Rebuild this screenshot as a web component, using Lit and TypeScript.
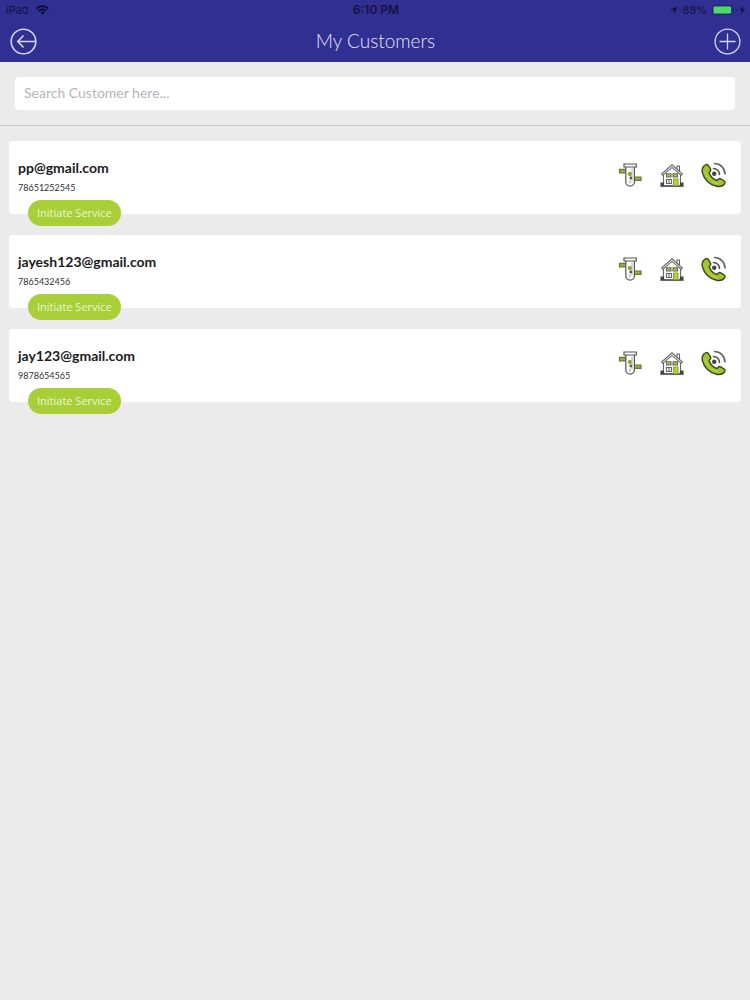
import { LitElement, html, css, svg } from "lit";
import { customElement, property, state } from "lit/decorators.js";

interface Customer {
  email: string;
  phone: string;
}

const doorIcon = svg`
  <svg viewBox="0 0 24 26" width="24" height="26" fill="none" stroke="#555" stroke-width="1.2" aria-hidden="true">
    <path d="M1.500 7.400H8V10.800H1.500z" fill="#9aad3a" stroke="#6b763c"/>
    <path d="M15.500 15H23V18.400H15.500z" fill="#9aad3a" stroke="#6b763c"/>
    <path d="M7.800 4.500V19.800a4.300 4.300 0 0 0 8.600 0V4.500z" fill="#fff"/>
    <path d="M6 2H18.300V5H6z" fill="#fff"/>
    <path d="M14 6.500V19.500" stroke="#bbb"/>
    <circle cx="11.800" cy="12" r="1.400" fill="#a4c639" stroke="#7c942c"/>
    <circle cx="12.800" cy="16" r="1.400" fill="#53602f" stroke="none"/>
    <path d="M11.900 18.500v3" stroke="#aaa"/>
  </svg>`;

const houseIcon = svg`
  <svg viewBox="0 0 24 26" width="24" height="26" fill="none" stroke="#666" stroke-width="1.1" aria-hidden="true">
    <path d="M3.500 12V23.500H20.500V12L12 4.500z" fill="#fff"/>
    <path d="M17 4V7.500L19.500 9.700V4z" fill="#fff"/>
    <path d="M1.600 12L12 2.800L22.400 12L21.200 13.300L12 5.400L2.800 13.300z" fill="#fff"/>
    <path d="M6.500 11.800H11V15H6.500zM13 11.800H17.500V15H13z" fill="#a4c639"/>
    <path d="M6.500 17.500H11.500V21.500H6.500zM9 17.500V21.500" fill="#fff"/>
    <path d="M13.500 17H18V23.500H13.500z" fill="#b5d334" stroke="#8fa83a"/>
    <path d="M1 21H3.500V24.500H1zM20.500 21H23V24.500H20.500z" fill="#444" stroke="#444"/>
    <path d="M1 24.500H23"/>
  </svg>`;

const phoneIcon = svg`
  <svg viewBox="0 0 26 26" width="26" height="26" fill="none" stroke="#3d4423" stroke-width="1.400" stroke-linecap="round" stroke-linejoin="round" aria-hidden="true">
    <path d="M2.700 4.200C1.200 6 .8 8.300 1.400 10.700C3 17.300 8.500 22.900 15.500 24.300C18.600 24.900 21.500 24.500 23.300 22.200C24.300 20.900 24.200 19.700 23.200 19L19.800 16.900C18.900 16.300 18 16.500 17.300 17.300L16 18.500C12.700 17.400 9.300 14 8.200 10.700L9.300 9.200C9.900 8.400 9.900 7.500 9.300 6.600L7.100 3.200C6.200 2 4.300 2.400 2.700 4.200z" fill="#9fc52c"/>
    <path d="M4.300 9.500C5.500 15 10.500 20.500 16.500 21.500" stroke="#b9dc48" stroke-width="1"/>
    <circle cx="13.200" cy="11.700" r="2.200" fill="#444" stroke="none"/>
    <path d="M12.500 6.500A6 6 0 0 1 18.500 12.500" stroke="#555" stroke-width="1.600"/>
    <path d="M13.500 1.500A10.500 10.500 0 0 1 24 12" stroke="#666" stroke-width="1.600"/>
  </svg>`;

@customElement("status-bar")
export class StatusBar extends LitElement {
  static styles = css`
    :host {
      display: grid;
      grid-template-columns: 1fr auto 1fr;
      align-items: center;
      height: 20px;
      padding: 0 4px 0 6px;
      font: 11px/20px Inter, sans-serif;
      color: #14133f;
    }
    .side { display: flex; align-items: center; gap: 7px; }
    .end { justify-content: flex-end; gap: 5px; }
    .time { font-size: 12px; font-weight: 600; }
    svg { display: block; }
  `;

  render() {
    return html`
      <div class="side">
        <span>iPad</span>
        <svg width="13" height="10" viewBox="0 0 13 10" fill="none" stroke="#0c0b28" stroke-width="1.800" aria-hidden="true">
          <path d="M.7 3.600a8.200 8.200 0 0 1 11.600 0M2.900 6a5.100 5.100 0 0 1 7.200 0"/>
          <path d="M6.500 9.800L4.500 7.600a2.900 2.900 0 0 1 4 0z" fill="#0c0b28" stroke="none"/>
        </svg>
      </div>
      <span class="time">6:10 PM</span>
      <div class="side end">
        <svg width="9" height="9" viewBox="0 0 9 9" fill="#14133f" aria-hidden="true"><path d="M8.500.5L5 8.500V4.500L.5 4z"/></svg>
        <span>88%</span>
        <svg width="34" height="10" viewBox="0 0 34 10" aria-hidden="true">
          <rect x=".5" y=".5" width="21" height="9" rx="2" fill="none" stroke="#26266c"/>
          <rect x="1.500" y="1.500" width="17.500" height="7" rx="1" fill="#4cd964"/>
          <path d="M24 3.500v3a2 2 0 0 0 0-3z" fill="#14133f"/>
          <path d="M31.500 0L27.500 5.600H30L28.800 10L33 4.200H30.500z" fill="#14133f"/>
        </svg>
      </div>
    `;
  }
}

@customElement("customer-card")
export class CustomerCard extends LitElement {
  @property({ attribute: false }) customer!: Customer;

  static styles = css`
    :host { display: block; }
    .card {
      display: flex;
      justify-content: space-between;
      align-items: flex-start;
      padding: 17px 14px 0 9px;
      border-radius: 4px;
      background: #fff;
    }
    .email {
      margin: 0;
      font: 700 14px/20px Lato, sans-serif;
      color: #1b1b1d;
    }
    .phone {
      margin: 0;
      font: 9px/20px Lato, sans-serif;
      color: #303032;
    }
    .initiate {
      display: block;
      height: 26px;
      margin: 2px 0 -12px 10px;
      padding: 0 9px;
      border: 0;
      border-radius: 13px;
      background: #a8cf38;
      color: #edf6d0;
      font: 11px/24px "Open Sans", sans-serif;
      white-space: nowrap;
    }
    .actions { display: flex; gap: 16px; padding-top: 4px; }
    .action {
      display: flex;
      align-items: center;
      justify-content: center;
      width: 26px;
      height: 26px;
      padding: 0;
      border: 0;
      background: none;
    }
  `;

  render() {
    const { email, phone } = this.customer;
    return html`
      <article class="card">
        <div>
          <h2 class="email">${email}</h2>
          <p class="phone">${phone}</p>
          <button class="initiate">Initiate Service</button>
        </div>
        <div class="actions">
          <button class="action" aria-label="Equipment">${doorIcon}</button>
          <button class="action" aria-label="Property">${houseIcon}</button>
          <button class="action" aria-label="Call">${phoneIcon}</button>
        </div>
      </article>
    `;
  }
}

@customElement("app-root")
export class AppRoot extends LitElement {
  @state() private query = "";

  private customers: Customer[] = [
    { email: "pp@gmail.com", phone: "78651252545" },
    { email: "jayesh123@gmail.com", phone: "7865432456" },
    { email: "jay123@gmail.com", phone: "9878654565" },
  ];

  static styles = css`
    :host {
      display: block;
      min-height: 100vh;
      background: #ebebec;
      font-family: Lato, sans-serif;
    }
    .top { background: #302f92; }
    .bar {
      display: flex;
      align-items: center;
      justify-content: space-between;
      height: 42px;
      padding: 0 9px 0 10px;
    }
    .title {
      margin: 0;
      font: 300 19px/26px Lato, sans-serif;
      color: #e4e4fa;
    }
    .round {
      width: 27px;
      height: 27px;
      padding: 0;
      border: 0;
      background: none;
    }
    .round svg { display: block; }
    .search {
      padding: 15px;
      border-bottom: 1px solid #c6c6c9;
    }
    .field {
      display: block;
      box-sizing: border-box;
      width: 100%;
      height: 33px;
      padding: 0 9px 2px;
      border: 0;
      border-radius: 4px;
      background: #fff;
      color: #333;
      font: 14px/20px Lato, sans-serif;
    }
    .field::placeholder { color: #b4b4b8; opacity: 1; }
    .list {
      display: grid;
      gap: 21px;
      margin: 0;
      padding: 15px 9px;
      list-style: none;
    }
  `;

  private onInput(e: Event) {
    this.query = (e.target as HTMLInputElement).value;
  }

  render() {
    const shown = this.customers.filter((c) => (c.email + c.phone).includes(this.query));
    return html`
      <header class="top">
        <status-bar></status-bar>
        <div class="bar">
          <button class="round" aria-label="Back">
            <svg width="27" height="27" viewBox="0 0 27 27" fill="none" stroke="#d5d6f8" stroke-width="1.600" aria-hidden="true">
              <circle cx="13.500" cy="13.500" r="12.300"/>
              <path d="M25.500 13.500H8M13.500 7.500L7.800 13.500L13.500 19.500"/>
            </svg>
          </button>
          <h1 class="title">My Customers</h1>
          <button class="round" aria-label="Add customer">
            <svg width="27" height="27" viewBox="0 0 27 27" fill="none" stroke="#d5d6f8" stroke-width="1.300" aria-hidden="true">
              <circle cx="13.500" cy="13.500" r="12.400"/>
              <path d="M5.500 13.500H21.500M13.500 5.500V21.500"/>
            </svg>
          </button>
        </div>
      </header>
      <main>
        <div class="search">
          <input class="field" type="search" aria-label="Search customers" placeholder="Search Customer here..." .value=${this.query} @input=${this.onInput} />
        </div>
        <ul class="list">
          ${shown.map((c) => html`<li><customer-card .customer=${c}></customer-card></li>`)}
        </ul>
      </main>
    `;
  }
}
